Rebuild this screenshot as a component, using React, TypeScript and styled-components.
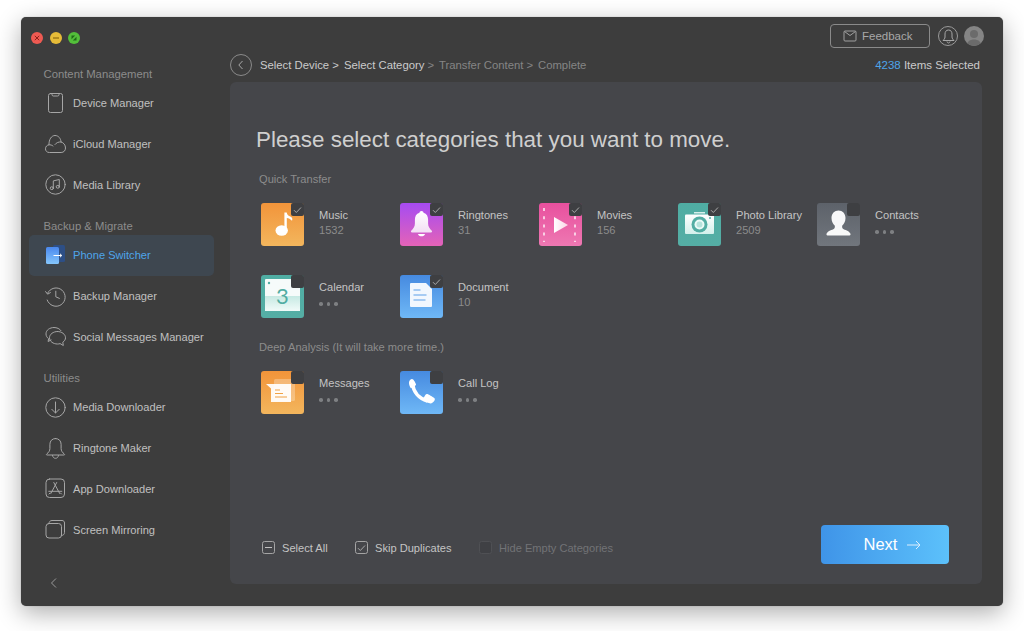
import React from "react";
import styled, { createGlobalStyle } from "styled-components";

const Global = createGlobalStyle`
  html, body { margin: 0; padding: 0; background: #fff; }
  body { font-family: "Liberation Sans", Arial, sans-serif; }
  * { box-sizing: border-box; }
`;

const Page = styled.div`
  width: 1024px;
  height: 631px;
  padding: 17px 21px 25px;
  background: #fff;
  overflow: hidden;
`;
const Win = styled.div`
  width: 982px;
  height: 589px;
  display: flex;
  background: #3d3d3d;
  border-radius: 5px;
  box-shadow: 0 7px 24px rgba(0, 0, 0, 0.32), 0 0 1px rgba(0, 0, 0, 0.4);
`;
const Sidebar = styled.aside`
  width: 209px;
  flex: none;
  display: flex;
  flex-direction: column;
  padding-top: 15px;
`;
const Lights = styled.div`
  display: flex;
  gap: 6.5px;
  padding-left: 10px;
  margin-bottom: 21px;
`;
const Light = styled.span<{ $c: string }>`
  width: 12px;
  height: 12px;
  border-radius: 50%;
  background: ${(p) => p.$c};
  display: flex;
  svg { display: block; }
`;
const GroupLabel = styled.div<{ $first?: boolean }>`
  height: 18px;
  line-height: 18px;
  margin-top: ${(p) => (p.$first ? 0 : 12)}px;
  padding-left: 22.5px;
  font-size: 11.3px;
  color: #8c8c8c;
`;
const NavRow = styled.div<{ $active?: boolean }>`
  height: 40.7px;
  width: 185px;
  margin-left: 8px;
  padding-left: 15px;
  display: flex;
  align-items: center;
  gap: 6px;
  border-radius: 5px;
  font-size: 11.1px;
  color: ${(p) => (p.$active ? "#4ea5ea" : "#c0c0c0")};
  background: ${(p) => (p.$active ? "#3e4750" : "transparent")};
  svg { flex: none; }
`;
const Collapse = styled.div`
  margin-top: auto;
  height: 46px;
  padding-left: 28px;
  display: flex;
  align-items: center;
`;
const Main = styled.main`
  flex: 1;
  min-width: 0;
  display: flex;
  flex-direction: column;
  padding: 7px 21px 22px 0;
`;
const TopBar = styled.div`
  height: 24px;
  display: flex;
  justify-content: flex-end;
  align-items: center;
  gap: 7px;
`;
const FeedbackBtn = styled.div`
  width: 100px;
  height: 24px;
  border: 1px solid #8a8a8a;
  border-radius: 4px;
  display: flex;
  align-items: center;
  gap: 5px;
  padding-left: 12px;
  font-size: 11.5px;
  color: #a8a8a8;
`;
const RoundBell = styled.div`
  width: 20px;
  height: 20px;
  margin-left: 1px;
  border: 1px solid #9a9a9a;
  border-radius: 50%;
  display: flex;
  align-items: center;
  justify-content: center;
`;
const Avatar = styled.div`
  width: 20px;
  height: 20px;
  border-radius: 50%;
  background: #858585;
  overflow: hidden;
  margin-left: -1px;
  margin-right: -2px;
`;
const CrumbBar = styled.div`
  height: 22px;
  margin: 6px 0;
  display: flex;
  align-items: center;
`;
const BackBtn = styled.div`
  width: 22px;
  height: 22px;
  border: 1px solid #8a8a8a;
  border-radius: 50%;
  display: flex;
  align-items: center;
  justify-content: center;
  margin-right: 8px;
`;
const Crumb = styled.span<{ $done?: boolean; $w: number }>`
  width: ${(p) => p.$w}px;
  flex: none;
  font-size: 11.3px;
  white-space: nowrap;
  color: ${(p) => (p.$done ? "#cbcbcb" : "#858585")};
`;
const Sep = styled.span`
  color: #858585;
`;
const Selected = styled.div`
  margin-left: auto;
  margin-right: 2px;
  font-size: 11.5px;
  color: #cbcbcb;
  b { font-weight: 400; color: #4ea5ea; }
`;
const Panel = styled.section`
  flex: 1;
  background: #45464a;
  border-radius: 6px;
  padding: 44px 33px 20px 26px;
  display: flex;
  flex-direction: column;
`;
const Title = styled.h1`
  margin: 0;
  font-size: 22.4px;
  line-height: 28px;
  font-weight: 400;
  color: #cfcfcf;
  white-space: nowrap;
`;
const SectionLabel = styled.div<{ $top: number }>`
  margin: ${(p) => p.$top}px 0 16px 3px;
  height: 16px;
  line-height: 16px;
  font-size: 11.1px;
  color: #8c8c8c;
`;
const TileGrid = styled.div`
  display: grid;
  grid-template-columns: repeat(5, 139px);
  row-gap: 29px;
  padding-left: 5px;
`;
const Tile = styled.div`
  height: 43px;
  display: flex;
  gap: 15px;
`;
const TileIcon = styled.div<{ $from: string; $to: string }>`
  position: relative;
  width: 43px;
  height: 43px;
  flex: none;
  border-radius: 3px;
  background: linear-gradient(180deg, ${(p) => p.$from}, ${(p) => p.$to});
  svg.art { display: block; width: 43px; height: 43px; }
`;
const Check = styled.span`
  position: absolute;
  top: 0;
  right: 0;
  width: 13px;
  height: 13px;
  border-radius: 2px;
  background: #3e3f42;
  display: flex;
  align-items: center;
  justify-content: center;
`;
const TileText = styled.div`
  padding-top: 5px;
  font-size: 11.1px;
  line-height: 15px;
  white-space: nowrap;
`;
const TileName = styled.div`
  color: #c4c4c4;
`;
const TileCount = styled.div`
  color: #8c8c8c;
`;
const Dots = styled.div`
  display: flex;
  gap: 4px;
  padding-top: 7px;
  span {
    width: 3.5px;
    height: 3.5px;
    border-radius: 50%;
    background: #7e8083;
  }
`;
const Footer = styled.div`
  margin-top: auto;
  height: 39px;
  display: flex;
  align-items: center;
  padding-left: 6px;
`;
const Opt = styled.div<{ $off?: boolean; $w: number }>`
  width: ${(p) => p.$w}px;
  flex: none;
  display: flex;
  align-items: center;
  gap: 7px;
  margin-top: 6px;
  font-size: 11.1px;
  white-space: nowrap;
  color: ${(p) => (p.$off ? "#727376" : "#c4c4c4")};
`;
const Box = styled.span<{ $off?: boolean }>`
  width: 13px;
  height: 13px;
  flex: none;
  border-radius: 2.5px;
  border: 1px solid ${(p) => (p.$off ? "#4f5054" : "#a4a4a4")};
  background: ${(p) => (p.$off ? "#3f4044" : "transparent")};
  display: flex;
  align-items: center;
  justify-content: center;
`;
const NextBtn = styled.div`
  margin-left: auto;
  width: 128px;
  height: 39px;
  border-radius: 4px;
  background: linear-gradient(90deg, #3f94e8, #5cc1fb);
  display: flex;
  align-items: center;
  justify-content: center;
  gap: 10px;
  padding-left: 15px;
  font-size: 16.5px;
  color: #fff;
`;

const S = { fill: "none", stroke: "#a6a6a6", strokeWidth: 1 } as const;
const NavSvg: React.FC<{ children: React.ReactNode }> = ({ children }) => (
  <svg width="23" height="23" viewBox="0 0 23 23" {...S} strokeLinecap="round" strokeLinejoin="round">{children}</svg>
);

const navIcons: Record<string, React.ReactNode> = {
  device: (
    <NavSvg>
      <rect x="4.5" y="1.5" width="14" height="19" rx="2" />
      <path d="M8 1.5v1.2c0 .8.5 1.3 1.3 1.3h4.4c.8 0 1.3-.5 1.3-1.3V1.5" />
    </NavSvg>
  ),
  cloud: (
    <NavSvg>
      <path d="M5 19.5C2.8 19.5 1.5 17.800 1.500 15.800 1.500 13.500 3.200 12 5 11.800 4.800 6.500 7.500 2.500 11 2.500 14.500 2.500 16.800 5.500 17 9 19.500 9.500 21.500 12 21.500 15 21.500 17.500 19.800 19.500 17.500 19.500Z" />
      <path d="M5 11.800c1.500-.2 3 .3 4 1.200M17 9c-2.300-.3-4.500.5-6 2.500" />
    </NavSvg>
  ),
  media: (
    <NavSvg>
      <circle cx="11.5" cy="11.5" r="9.7" />
      <path d="M9.3 15.2V7.9l6-1.4v7.3" />
      <ellipse cx="7.8" cy="15.2" rx="1.6" ry="1.4" />
      <ellipse cx="13.8" cy="13.8" rx="1.6" ry="1.4" />
    </NavSvg>
  ),
  backup: (
    <NavSvg>
      <path d="M3.6 8.2A9.2 9.2 0 1 1 3.2 15" />
      <path d="M1.6 6.6l2 2.6 2.8-1.6" />
      <path d="M11.8 6.2v5.6l3.6 1.6" />
    </NavSvg>
  ),
  social: (
    <NavSvg>
      <path d="M10 2.5c-4.5 0-8 2.7-8 6.400 0 2 1 3.600 2.600 4.800l-.5 2.800 3-1.500" />
      <path d="M10 2.500c3 0 5.600 1.200 7 3.200" />
      <path d="M13.500 6.500c-4.400 0-8 2.800-8 6.300s3.600 6.200 8 6.200c.9 0 1.800-.1 2.600-.4l3.200 1.900-.5-3.300c1.700-1.100 2.700-2.700 2.700-4.400 0-3.500-3.600-6.300-8-6.300z" />
    </NavSvg>
  ),
  download: (
    <NavSvg>
      <circle cx="11.500" cy="11.500" r="9.700" />
      <path d="M11.500 6v11M7.800 13.300l3.700 3.700 3.700-3.700" />
    </NavSvg>
  ),
  bell: (
    <NavSvg>
      <path d="M11.500 1.500c-3.500 0-5.600 2.600-5.600 5.800v4.200c0 2.400-1.300 4-3.200 5.500-.6.5-.3 1 .4 1h16.800c.7 0 1-.5.4-1-1.900-1.500-3.200-3.100-3.200-5.500V7.300c0-3.200-2.100-5.800-5.600-5.800z" />
      <path d="M8.500 18.500c.3 1.800 1.500 2.800 3 2.800s2.700-1 3-2.800" />
    </NavSvg>
  ),
  app: (
    <NavSvg>
      <rect x="2" y="2" width="18.500" height="18.500" rx="3.500" />
      <path d="M12.700 5.500L6.800 16.500M9.800 5.500l5.900 11M4.800 14.300h13M5 17l1-1M17.500 17l-1-1" />
    </NavSvg>
  ),
  mirror: (
    <NavSvg>
      <rect x="2" y="5.500" width="15.500" height="14.500" rx="3" />
      <path d="M5 5.500c0-1.700 1-3 3-3h10c1.600 0 2.500 1 2.500 2.500v9.500c0 1.700-1.100 3-3 3" />
    </NavSvg>
  ),
  phone: (
    <svg width="23" height="23" viewBox="0 0 23 23">
      <defs>
        <linearGradient id="ps" x1="0" y1="0" x2="0" y2="1">
          <stop offset="0" stopColor="#4a88ee" />
          <stop offset="1" stopColor="#84c6fc" />
        </linearGradient>
      </defs>
      <rect x="9" y="1" width="12" height="17" rx="1.500" fill="#2d4f86" />
      <rect x="2" y="3" width="13" height="17" rx="1.500" fill="url(#ps)" />
      <path d="M9.500 11.500h8M16 9.800l1.800 1.700-1.800 1.700" stroke="#fff" strokeWidth="1" fill="none" />
    </svg>
  ),
};

type NavItem = { key: string; label: string; active?: boolean };
const groups: { title: string; items: NavItem[] }[] = [
  {
    title: "Content Management",
    items: [
      { key: "device", label: "Device Manager" },
      { key: "cloud", label: "iCloud Manager" },
      { key: "media", label: "Media Library" },
    ],
  },
  {
    title: "Backup & Migrate",
    items: [
      { key: "phone", label: "Phone Switcher", active: true },
      { key: "backup", label: "Backup Manager" },
      { key: "social", label: "Social Messages Manager" },
    ],
  },
  {
    title: "Utilities",
    items: [
      { key: "download", label: "Media Downloader" },
      { key: "bell", label: "Ringtone Maker" },
      { key: "app", label: "App Downloader" },
      { key: "mirror", label: "Screen Mirroring" },
    ],
  },
];

const Art: React.FC<{ children: React.ReactNode }> = ({ children }) => (
  <svg className="art" viewBox="0 0 43 43">{children}</svg>
);

const art = {
  music: (
    <Art>
      <ellipse cx="20.700" cy="27.500" rx="6.200" ry="5.200" fill="#fff" />
      <path d="M23.400 27.500V9.500h2.300c.3 2.700 2.600 3.500 4.400 4.600 1.400.9 1.500 2.500.9 3.700-1.500-1.600-3.500-2.400-5.200-2.700V27.500z" fill="#fff" />
    </Art>
  ),
  bell: (
    <Art>
      <defs>
        <linearGradient id="bl" x1="0" y1="0" x2="0" y2="1">
          <stop offset="0" stopColor="#fff" />
          <stop offset="1" stopColor="#f3def5" />
        </linearGradient>
      </defs>
      <path d="M21.500 8c-1.200 0-2 .8-2 1.800-3.300.9-4.600 3.700-4.600 7v3.700c0 3.200-1.700 5.300-3.700 7.300-.6.800-.2 1.600.8 1.600h19c1 0 1.400-.8.800-1.600-2-2-3.700-4.100-3.700-7.300v-3.700c0-3.300-1.300-6.100-4.600-7 0-1-.8-1.800-2-1.800z" fill="url(#bl)" />
      <path d="M18 31h7c-.3 1.400-1.900 2.300-3.500 2.300S18.300 32.400 18 31z" fill="#fff" />
    </Art>
  ),
  movie: (
    <Art>
      <defs>
        <linearGradient id="pl" x1="0" y1="0" x2="1" y2="0">
          <stop offset="0" stopColor="#fff" />
          <stop offset="1" stopColor="#fbd5e6" />
        </linearGradient>
      </defs>
      <path d="M15 14l14 8-14 8z" fill="url(#pl)" />
      <path d="M5 5v34M36 5v34" stroke="#fff" strokeOpacity="0.9" strokeWidth="1.500" strokeDasharray="3 5.200" fill="none" />
    </Art>
  ),
  photo: (
    <Art>
      <defs>
        <linearGradient id="cm" x1="0" y1="0" x2="0" y2="1">
          <stop offset="0" stopColor="#fff" />
          <stop offset="1" stopColor="#d3f0eb" />
        </linearGradient>
      </defs>
      <rect x="16" y="9" width="11" height="1.500" fill="#d6efeb" />
      <rect x="7" y="11.500" width="29" height="19.500" rx="1" fill="url(#cm)" />
      <circle cx="21.500" cy="21.500" r="8" fill="#52ada3" />
      <circle cx="21.500" cy="21.500" r="5" fill="#eafaf7" />
      <circle cx="21.500" cy="21.500" r="3" fill="#b5e3dc" />
      <circle cx="32" cy="15" r="1" fill="#52ada3" />
    </Art>
  ),
  contact: (
    <Art>
      <path d="M21.500 7.500c-4 0-7 3-7 7.500 0 3.500 1.600 6 3.200 7.500.4 1.200.2 2.500-.6 3.300-1.900 1.500-6 1.700-7.600 5-.2.800.2 1.700 1 1.700h22c.8 0 1.200-.9 1-1.700-1.600-3.300-5.700-3.500-7.600-5-.8-.8-1-2.100-.6-3.300 1.600-1.500 3.200-4 3.200-7.500 0-4.500-3-7.500-7-7.500z" fill="#fff" fillOpacity="0.95" />
    </Art>
  ),
  calendar: (
    <Art>
      <defs>
        <linearGradient id="cl" x1="0" y1="0" x2="0" y2="1">
          <stop offset="0" stopColor="#c6e9e3" />
          <stop offset="1" stopColor="#f1fbf9" />
        </linearGradient>
      </defs>
      <rect x="4" y="4" width="35" height="32" rx="1" fill="#f6fbfa" />
      <rect x="4" y="21" width="35" height="15" fill="url(#cl)" />
      <circle cx="8" cy="8" r="1.200" fill="#52ada3" />
      <text x="21.500" y="29" textAnchor="middle" fontSize="22" fontWeight="400" fontFamily="Lato, Liberation Sans, sans-serif" fill="#52ada3">3</text>
    </Art>
  ),
  doc: (
    <Art>
      <path d="M11 8h15l6 6v17a1 1 0 0 1-1 1H11a1 1 0 0 1-1-1V9a1 1 0 0 1 1-1z" fill="#f1f7fe" />
      <path d="M13.500 15h7M13.500 20h13M13.500 25h12" stroke="#5c9fe8" strokeWidth="1.200" fill="none" />
    </Art>
  ),
  message: (
    <Art>
      <rect x="13" y="8" width="21" height="22" rx="1.500" fill="#fff" fillOpacity="0.28" />
      <path d="M5 13h25v18H10V17.500z" fill="#fff" fillOpacity="0.93" />
      <path d="M14 19h5M14 22.500h8M14 26h12" stroke="#f0a245" strokeWidth="1.200" fill="none" />
    </Art>
  ),
  call: (
    <Art>
      <path d="M12.500 13c1 8 6.500 14.500 15 17" stroke="#fff" strokeWidth="3.600" fill="none" />
      <path d="M9 11.500c.2-2 1.700-3.500 3-3.500 1.600 0 3.300 3.300 4 5.300.2.800-.5 1.400-1.500 2l-3.600 2C9.700 15.500 8.900 13.500 9 11.500zM23.500 27l2-3.200c.5-.8 1.300-1.100 2-.7 2.400 1.300 6.400 3.500 7.200 4.500.7 1.700-1.600 4.500-4 4.900-2.400-.2-4.900-1.500-7.200-3.200z" fill="#fff" />
    </Art>
  ),
};

const TickMark = () => (
  <svg width="9" height="8" viewBox="0 0 9 8">
    <path d="M1 4.200l2.300 2.300L8 1.500" fill="none" stroke="#a9a9a9" strokeWidth="1" />
  </svg>
);

type Cat = { name: string; count?: string; from: string; to: string; art: React.ReactNode; on: boolean };
const quick: Cat[] = [
  { name: "Music", count: "1532", from: "#f2943a", to: "#f3b65d", art: art.music, on: true },
  { name: "Ringtones", count: "31", from: "#a64bf2", to: "#e463b7", art: art.bell, on: true },
  { name: "Movies", count: "156", from: "#e8509e", to: "#ee78b2", art: art.movie, on: true },
  { name: "Photo Library", count: "2509", from: "#4fada3", to: "#55aea5", art: art.photo, on: true },
  { name: "Contacts", from: "#5d626a", to: "#71767d", art: art.contact, on: false },
  { name: "Calendar", from: "#4fada3", to: "#55aea5", art: art.calendar, on: false },
  { name: "Document", count: "10", from: "#468ae0", to: "#6fb8f6", art: art.doc, on: true },
];
const deep: Cat[] = [
  { name: "Messages", from: "#f2943a", to: "#f3b65d", art: art.message, on: false },
  { name: "Call Log", from: "#468ae0", to: "#6fb8f6", art: art.call, on: false },
];

const CatTile: React.FC<{ c: Cat }> = ({ c }) => (
  <Tile>
    <TileIcon $from={c.from} $to={c.to}>
      {c.art}
      <Check>{c.on && <TickMark />}</Check>
    </TileIcon>
    <TileText>
      <TileName>{c.name}</TileName>
      {c.count ? (
        <TileCount>{c.count}</TileCount>
      ) : (
        <Dots>
          <span />
          <span />
          <span />
        </Dots>
      )}
    </TileText>
  </Tile>
);

export default function App() {
  return (
    <Page>
      <Global />
      <Win>
        <Sidebar>
          <Lights>
            <Light $c="#ee5a52">
              <svg width="12" height="12" viewBox="0 0 12 12">
                <path d="M3.800 3.800l4.400 4.400M8.200 3.800L3.800 8.200" stroke="#8e2019" strokeWidth="1" />
              </svg>
            </Light>
            <Light $c="#e6bb38">
              <svg width="12" height="12" viewBox="0 0 12 12">
                <path d="M3 6h6" stroke="#8c6a10" strokeWidth="1.200" />
              </svg>
            </Light>
            <Light $c="#53bf3a">
              <svg width="12" height="12" viewBox="0 0 12 12">
                <path d="M3.500 7.200V3.500h3.700zM8.500 4.800v3.700H4.800z" fill="#1f6a17" />
              </svg>
            </Light>
          </Lights>
          {groups.map((g, i) => (
            <React.Fragment key={g.title}>
              <GroupLabel $first={i === 0}>{g.title}</GroupLabel>
              {g.items.map((it) => (
                <NavRow key={it.key} $active={it.active}>
                  {navIcons[it.key]}
                  {it.label}
                </NavRow>
              ))}
            </React.Fragment>
          ))}
          <Collapse>
            <svg width="10" height="12" viewBox="0 0 10 12">
              <path d="M7 1.500L2.500 6 7 10.500" fill="none" stroke="#9a9a9a" strokeWidth="1" />
            </svg>
          </Collapse>
        </Sidebar>
        <Main>
          <TopBar>
            <FeedbackBtn>
              <svg width="14" height="12" viewBox="0 0 14 12" fill="none" stroke="#a0a0a0" strokeWidth="1">
                <rect x="1" y="1" width="12" height="10" rx="1" />
                <path d="M1.500 1.500L7 5.500l5.500-4" />
              </svg>
              Feedback
            </FeedbackBtn>
            <RoundBell>
              <svg width="13" height="15" viewBox="0 0 13 15" fill="none" stroke="#a8a8a8" strokeWidth="1">
                <path d="M6.500 1C4 1 3 3 3 5v3c0 1.500-1 2.500-2 3.500h11c-1-1-2-2-2-3.500V5c0-2-1-4-3.500-4z" />
                <path d="M5 12.500c.3 1 .8 1.500 1.500 1.500S7.700 13.500 8 12.500" />
              </svg>
            </RoundBell>
            <Avatar>
              <svg width="20" height="20" viewBox="0 0 20 20">
                <circle cx="10" cy="8" r="4" fill="#6b6b6b" />
                <path d="M2.500 20c.5-4.500 3.500-6.500 7.500-6.500s7 2 7.500 6.500z" fill="#6b6b6b" />
              </svg>
            </Avatar>
          </TopBar>
          <CrumbBar>
            <BackBtn>
              <svg width="8" height="10" viewBox="0 0 8 10">
                <path d="M5.500 1L1.800 5l3.700 4" fill="none" stroke="#a8a8a8" strokeWidth="1" />
              </svg>
            </BackBtn>
            <Crumb $done $w={84}>Select Device &gt;</Crumb>
            <Crumb $done $w={95}>Select Category <Sep>&gt;</Sep></Crumb>
            <Crumb $w={99}>Transfer Content &gt;</Crumb>
            <Crumb $w={60}>Complete</Crumb>
            <Selected><b>4238</b> Items Selected</Selected>
          </CrumbBar>
          <Panel>
            <Title>Please select categories that you want to move.</Title>
            <SectionLabel $top={17}>Quick Transfer</SectionLabel>
            <TileGrid>
              {quick.map((c) => (
                <CatTile key={c.name} c={c} />
              ))}
            </TileGrid>
            <SectionLabel $top={21}>Deep Analysis (It will take more time.)</SectionLabel>
            <TileGrid>
              {deep.map((c) => (
                <CatTile key={c.name} c={c} />
              ))}
            </TileGrid>
            <Footer>
              <Opt $w={93}>
                <Box>
                  <svg width="7" height="3" viewBox="0 0 7 3">
                    <path d="M0 1.500h7" stroke="#c0c0c0" strokeWidth="1" />
                  </svg>
                </Box>
                Select All
              </Opt>
              <Opt $w={124}>
                <Box>
                  <TickMark />
                </Box>
                Skip Duplicates
              </Opt>
              <Opt $off $w={150}>
                <Box $off />
                Hide Empty Categories
              </Opt>
              <NextBtn>
                Next
                <svg width="14" height="10" viewBox="0 0 14 10" fill="none" stroke="#dbeefd" strokeWidth="1">
                  <path d="M0 5h13M9 1l4 4-4 4" />
                </svg>
              </NextBtn>
            </Footer>
          </Panel>
        </Main>
      </Win>
    </Page>
  );
}
